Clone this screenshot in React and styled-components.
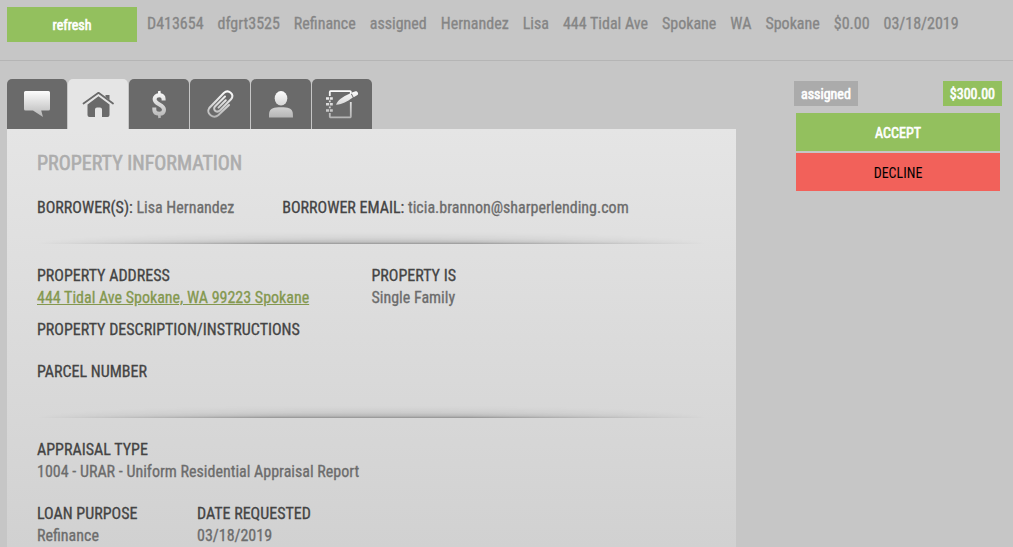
import React, { useState } from 'react'
import styled, { createGlobalStyle } from 'styled-components';

const orderSummary = [
    'D413654', 'dfgrt3525', 'Refinance', 'assigned', 'Hernandez', 'Lisa',
    '444 Tidal Ave', 'Spokane', 'WA', 'Spokane', '$0.00', '03/18/2019',
];

const tabs = [
    { id: 'messages', label: 'Messages', Icon: MessageIcon },
    { id: 'property', label: 'Property', Icon: HomeIcon },
    { id: 'fees', label: 'Fees', Icon: DollarIcon },
    { id: 'files', label: 'Attachments', Icon: ClipIcon },
    { id: 'contact', label: 'Contact', Icon: PersonIcon },
    { id: 'notes', label: 'Notes', Icon: NotebookIcon },
];

export default function App() {
    const [active, setActive] = useState('property');

    return (
        <Page>
            <GlobalStyle />
            <Header>
                <RefreshButton type='button'>refresh</RefreshButton>
                <Summary>
                    {orderSummary.map((item, i) => <li key={i}>{item}</li>)}
                </Summary>
            </Header>

            <Content>
                <Main>
                    <Tabs role='tablist'>
                        {tabs.map(({ id, label, Icon }) => (
                            <Tab
                                key={id}
                                type='button'
                                role='tab'
                                aria-label={label}
                                aria-selected={active === id}
                                $active={active === id}
                                onClick={() => setActive(id)}
                            >
                                <Icon />
                            </Tab>
                        ))}
                    </Tabs>

                    <Panel role='tabpanel'>
                        <Title>PROPERTY INFORMATION</Title>
                        <Borrower>
                            <p><b>BORROWER(S):</b> Lisa Hernandez</p>
                            <p><b>BORROWER EMAIL:</b> ticia.brannon@sharperlending.com</p>
                        </Borrower>

                        <Divider />

                        <Halves>
                            <Field>
                                <dt>PROPERTY ADDRESS</dt>
                                <dd><a href='#map'>444 Tidal Ave Spokane, WA 99223 Spokane</a></dd>
                            </Field>
                            <Field>
                                <dt>PROPERTY IS</dt>
                                <dd>Single Family</dd>
                            </Field>
                        </Halves>
                        <Stack>
                            <Field><dt>PROPERTY DESCRIPTION/INSTRUCTIONS</dt></Field>
                            <Field><dt>PARCEL NUMBER</dt></Field>
                        </Stack>

                        <Divider $spaced />

                        <Stack>
                            <Field>
                                <dt>APPRAISAL TYPE</dt>
                                <dd>1004 - URAR - Uniform Residential Appraisal Report</dd>
                            </Field>
                        </Stack>
                        <Loan>
                            <Field>
                                <dt>LOAN PURPOSE</dt>
                                <dd>Refinance</dd>
                            </Field>
                            <Field>
                                <dt>DATE REQUESTED</dt>
                                <dd>03/18/2019</dd>
                            </Field>
                        </Loan>
                    </Panel>
                </Main>

                <Sidebar>
                    <Badges>
                        <Badge>assigned</Badge>
                        <Badge $green>$300.00</Badge>
                    </Badges>
                    <Actions>
                        <AcceptButton type='button'>ACCEPT</AcceptButton>
                        <DeclineButton type='button'>DECLINE</DeclineButton>
                    </Actions>
                </Sidebar>
            </Content>
        </Page>
    );
}

function Fade({ id }) {
    return (
        <linearGradient id={id} gradientUnits='userSpaceOnUse' x1='0' y1='2' x2='0' y2='30'>
            <stop offset='0' stopColor='#ffffff' />
            <stop offset='1' stopColor='#b4b4b4' />
        </linearGradient>
    );
}

function MessageIcon() {
    return (
        <Svg viewBox='0 0 32 32'>
            <Fade id='fadeMessage' />
            <path
                fill='url(#fadeMessage)'
                d='M4.500 3h23A1.500 1.500 0 0 1 29 4.500V21a1.500 1.500 0 0 1-1.500 1.500H20.200L22 29 12 22.500H4.500A1.500 1.500 0 0 1 3 21V4.500A1.500 1.500 0 0 1 4.500 3z'
            />
        </Svg>
    );
}

function HomeIcon() {
    return (
        <Svg viewBox='0 0 32 32'>
            <path d='M1.500 15.500 16.500 4.800 31 15.500' fill='none' stroke='#6a6a6a' strokeWidth='1.800' strokeLinecap='round' strokeLinejoin='round' />
            <path fill='#6a6a6a' d='M23.500 7h4v5l-4-3z' />
            <path fill='#6a6a6a' d='M16.500 8.300 27.500 16.500V27a2 2 0 0 1-2 2H20v-7.500a2 2 0 0 0-2-2h-3a2 2 0 0 0-2 2V29H7.500a2 2 0 0 1-2-2V16.500z' />
        </Svg>
    );
}

function DollarIcon() {
    return (
        <Svg viewBox='0 0 32 32'>
            <Fade id='fadeDollar' />
            <g fill='none' stroke='url(#fadeDollar)'>
                <path strokeWidth='4' d='M20.600 12.500V11C20.600 8.500 19 7.300 16.300 7.300S11.600 8.800 11.600 11c0 5.800 9.400 5.200 9.400 10.700 0 2.700-1.900 4-4.700 4s-5-1.300-5-4.200V19.500' />
                <path strokeWidth='2.600' d='M16.200 3l.4 4M16.200 26l.4 4' />
            </g>
        </Svg>
    );
}

function ClipIcon() {
    return (
        <Svg viewBox='0 0 32 32'>
            <Fade id='fadeClip' />
            <path
                fill='none'
                stroke='url(#fadeClip)'
                strokeWidth='2'
                strokeLinecap='round'
                d='M25 17 14.500 27C9.500 31.500 1.500 25.500 5.300 20L19.800 5C24.500.800 31 6.500 27 11.300L16.200 22.300C12.800 25.500 8.200 21.800 11 18.500L21 8.500M21.800 12.200 14.500 19.600'
            />
        </Svg>
    );
}

function PersonIcon() {
    return (
        <Svg viewBox='0 0 32 32'>
            <Fade id='fadePerson' />
            <ellipse cx='16' cy='10.300' rx='6.300' ry='7.300' fill='url(#fadePerson)' />
            <path fill='url(#fadePerson)' d='M4 29.500c0-6 .5-8 4-9.300 2.500-1.400 13.500-1.400 16 0 3.500 1.300 4 3.300 4 9.300z' />
        </Svg>
    );
}

function NotebookIcon() {
    return (
        <Svg viewBox='0 0 32 32'>
            <Fade id='fadeNotebook' />
            <g fill='none' stroke='url(#fadeNotebook)' strokeWidth='1.800'>
                <path d='M3.800 8V4a.8.800 0 0 1 .8-.8H24a.8.800 0 0 1 .8.800v2M24.800 14v14.500a.8.800 0 0 1-.8.800H4.600a.8.800 0 0 1-.8-.8V25M3.800 12.500v1.700M3.800 18.500v1.700' />
                <path strokeWidth='2.600' d='M0 10.500h3M3.800 10.500h3M0 16.300h3M3.800 16.300h3M0 22.500h3M3.800 22.500h3' />
            </g>
            <path fill='url(#fadeNotebook)' d='M10 16.800C12 12 15.500 9.300 24.500 5.300l2.300 4.200C20.500 14 17 16 10 16.800z' />
            <path fill='url(#fadeNotebook)' d='M25.300 4.800 29.500 3.200c2-.5 3.500 2.500 2 3.700L27.700 9.200z' />
        </Svg>
    );
}

const GlobalStyle = createGlobalStyle`
    * {
        box-sizing: border-box;
        margin: 0;
        padding: 0;
    }

    body {
        background-color: #c6c6c6;
        color: #6c6c6c;
        font-family: 'Roboto Condensed', Roboto, sans-serif;
        font-size: 16px;
        line-height: 22px;
        -webkit-text-stroke: 0.3px;
    }

    button {
        border: none;
        font-family: inherit;
        cursor: pointer;
    }
`;

const Page = styled.div`
    min-height: 100vh;
    display: flex;
    flex-direction: column;
`;

const Header = styled.header`
    display: flex;
    align-items: flex-start;
    gap: 10px;
    padding: 7px 7px 18px;
    border-bottom: 1px solid #b5b5b5;
`;

const Button = styled.button`
    height: 38px;
    padding-top: 2px;
    font-size: 14px;
`;

const RefreshButton = styled(Button)`
    width: 130px;
    height: 35px;
    padding-top: 0;
    background-color: #93c05e;
    color: #fff;
    -webkit-text-stroke: 0.6px;
`;

const Summary = styled.ul`
    display: flex;
    gap: 14px;
    padding-top: 6px;
    list-style: none;
    color: #858585;
    white-space: nowrap;
`;

const Content = styled.div`
    flex: 1;
    display: flex;
    gap: 58px;
    padding: 18px 11px 0 7px;
`;

const Main = styled.main`
    flex: 1;
    display: flex;
    flex-direction: column;
`;

const Tabs = styled.div`
    display: flex;
    gap: 1px;
`;

const Tab = styled.button`
    width: 60px;
    height: 50px;
    display: flex;
    align-items: center;
    justify-content: center;
    border-radius: 5px 5px 0 0;
    background-color: ${({ $active }) => $active ? '#e5e5e5' : '#6a6a6a'};
`;

const Svg = styled.svg`
    width: 32px;
    height: 32px;
    overflow: visible;
`;

const Panel = styled.section`
    flex: 1;
    padding: 22px 30px 0;
    background: linear-gradient(#e5e5e5, #d1d1d1);

    b, dt {
        color: #444;
        font-weight: 400;
    }

    a {
        color: #84984f;
    }
`;

const Title = styled.h1`
    color: #adadad;
    font-size: 20px;
    font-weight: 400;
    line-height: 24px;
    -webkit-text-stroke: 0.6px;
`;

const Borrower = styled.div`
    display: flex;
    gap: 48px;
    margin-top: 22px;
    white-space: nowrap;
`;

const Divider = styled.hr`
    height: 14px;
    margin: ${({ $spaced }) => $spaced ? '21px' : '11px'} 0 21px;
    border: none;
    background: linear-gradient(to top, rgba(0, 0, 0, 0.32), rgba(0, 0, 0, 0.14) 2px, rgba(0, 0, 0, 0.07) 5px, transparent);
    mask-image: radial-gradient(ellipse 50% 100% at 50% 100%, #000 30%, transparent);
`;

const Halves = styled.dl`
    display: grid;
    grid-template-columns: 1fr 1fr;
    margin-bottom: 10px;
`;

const Stack = styled.dl`
    display: grid;
    gap: 20px;
`;

const Loan = styled.dl`
    display: grid;
    grid-template-columns: 160px 1fr;
    margin-top: 20px;
`;

const Field = styled.div`
    white-space: nowrap;
`;

const Sidebar = styled.aside`
    width: 208px;
    padding-top: 2px;
`;

const Badges = styled.div`
    display: flex;
    justify-content: space-between;
`;

const Badge = styled.span`
    padding: 2px 7px 1px;
    background-color: ${({ $green }) => $green ? '#93c05e' : '#ababab'};
    color: #fff;
    font-size: 14px;
    -webkit-text-stroke: 0.6px;
`;

const Actions = styled.div`
    display: flex;
    flex-direction: column;
    gap: 2px;
    padding: 7px 2px 0;
`;

const AcceptButton = styled(Button)`
    background-color: #93c05e;
    color: #fff;
    -webkit-text-stroke: 0.6px;
`;

const DeclineButton = styled(Button)`
    background-color: #f2615a;
    color: #000;
    -webkit-text-stroke: 0;
`;
